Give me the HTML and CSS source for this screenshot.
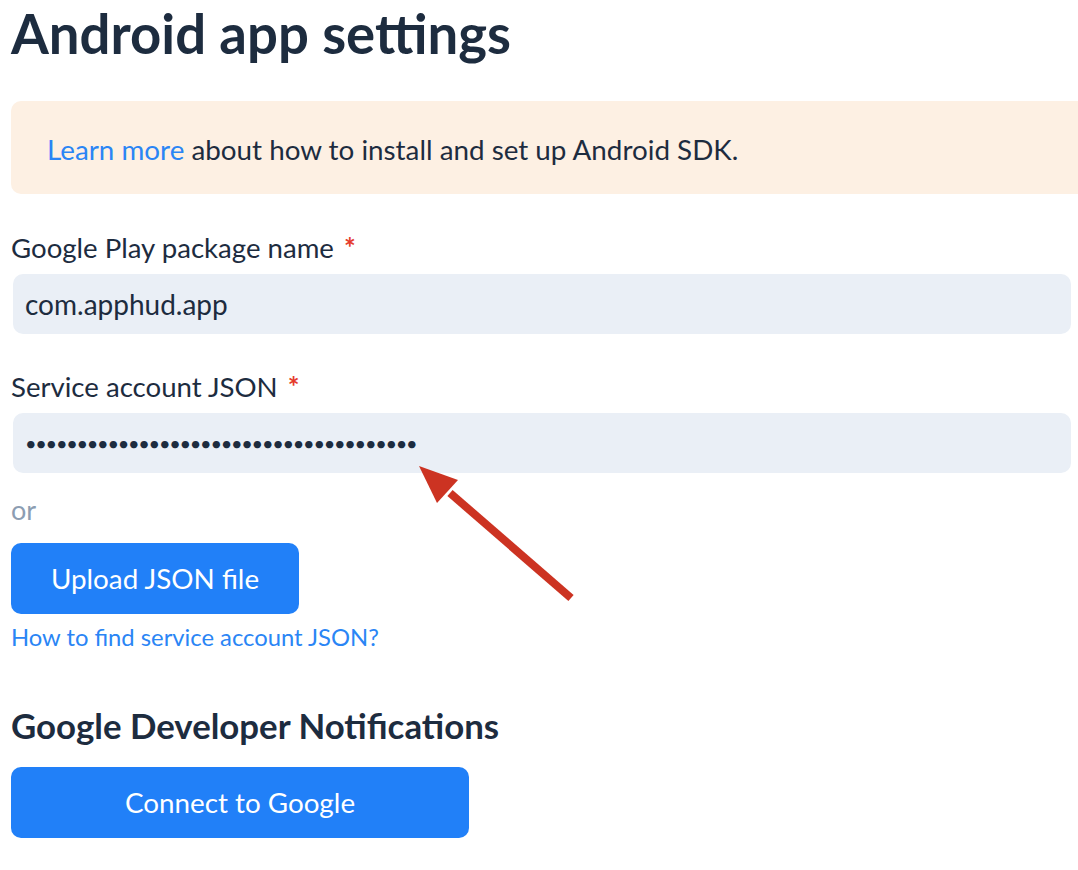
FILE: index.html
```html
<!DOCTYPE html>
<html lang="en">
<head>
<meta charset="utf-8">
<title>Android app settings</title>
<link rel="stylesheet" href="styles.css">
</head>
<body>
<main class="page">
  <h1 class="title">Android app settings</h1>
  <div class="banner">
    <p class="banner-text"><a class="link" href="#">Learn more</a> about how to install and set up Android SDK.</p>
  </div>

  <div class="field field-first">
    <label class="label">Google Play package name <span class="req">*</span></label>
    <div class="input">com.apphud.app</div>
  </div>

  <div class="field">
    <label class="label">Service account JSON <span class="req">*</span></label>
    <div class="input input-secret"><span class="dots">••••••••••••••••••••••••••••••••••••••</span></div>
  </div>

  <div class="or">or</div>
  <button class="btn btn-upload" type="button">Upload JSON file</button>
  <a class="help-link" href="#">How to find service account JSON?</a>

  <h2 class="subtitle">Google Developer Notifications</h2>
  <button class="btn btn-connect" type="button">Connect to Google</button>

  <svg class="arrow" width="200" height="160" viewBox="0 0 200 160" aria-hidden="true">
    <line x1="50" y1="33" x2="171" y2="138" stroke="#cc3322" stroke-width="8" />
    <polygon points="19,6 58,20 37,43" fill="#cc3322" />
  </svg>
</main>
</body>
</html>
```

FILE: styles.css
```css
html, body {
  margin: 0;
  padding: 0;
  background: #ffffff;
  overflow: hidden;
}

body {
  font-family: "Lato", "Noto Sans", sans-serif;
  color: #1d2c3f;
}

.page {
  position: relative;
  padding: 0 7px 0 11px;
  width: 1060px;
}

.title {
  margin: 0;
  padding-top: 2px;
  font-size: 54.5px;
  font-weight: 700;
  line-height: 62px;
  height: 99px;
}

.banner {
  box-sizing: border-box;
  height: 93px;
  margin-right: -40px;
  background: #fdf0e3;
  border-radius: 10px;
  display: flex;
  align-items: center;
  padding: 3px 36px 0;
}

.banner-text {
  margin: 0;
  font-size: 27.8px;
}

.link {
  color: #2a85f5;
  text-decoration: none;
}

.field {
  display: flex;
  flex-direction: column;
}

.field-first {
  margin-top: 36px;
}

.field + .field {
  margin-top: 35px;
}

.label {
  font-size: 27.6px;
  line-height: 36px;
  margin-bottom: 8px;
}

.req {
  color: #e53b2c;
  font-weight: 700;
  margin-left: 3px;
}

.input {
  box-sizing: border-box;
  height: 60px;
  margin: 0 0 0 2px;
  background: #eaeff6;
  border-radius: 10px;
  display: flex;
  align-items: center;
  padding: 0 12px;
  font-size: 28px;
}

.dots {
  font-size: 20px;
  letter-spacing: -1.3px;
}

.or {
  margin-top: 21px;
  font-size: 27px;
  line-height: 32px;
  color: #8c9db2;
}

.btn {
  display: block;
  border: none;
  border-radius: 10px;
  background: #2180f8;
  color: #ffffff;
  font-family: inherit;
  font-size: 27.8px;
  height: 71px;
  padding: 0;
}

.btn-upload {
  margin-top: 17px;
  width: 288px;
}

.help-link {
  display: block;
  margin-top: 9px;
  font-size: 23.8px;
  line-height: 28px;
  color: #2a85f5;
  text-decoration: none;
}

.subtitle {
  margin: 55px 0 0;
  font-size: 34.8px;
  font-weight: 700;
  line-height: 40px;
}

.btn-connect {
  margin-top: 21px;
  width: 458px;
}

.arrow {
  position: absolute;
  left: 400px;
  top: 460px;
}
```
